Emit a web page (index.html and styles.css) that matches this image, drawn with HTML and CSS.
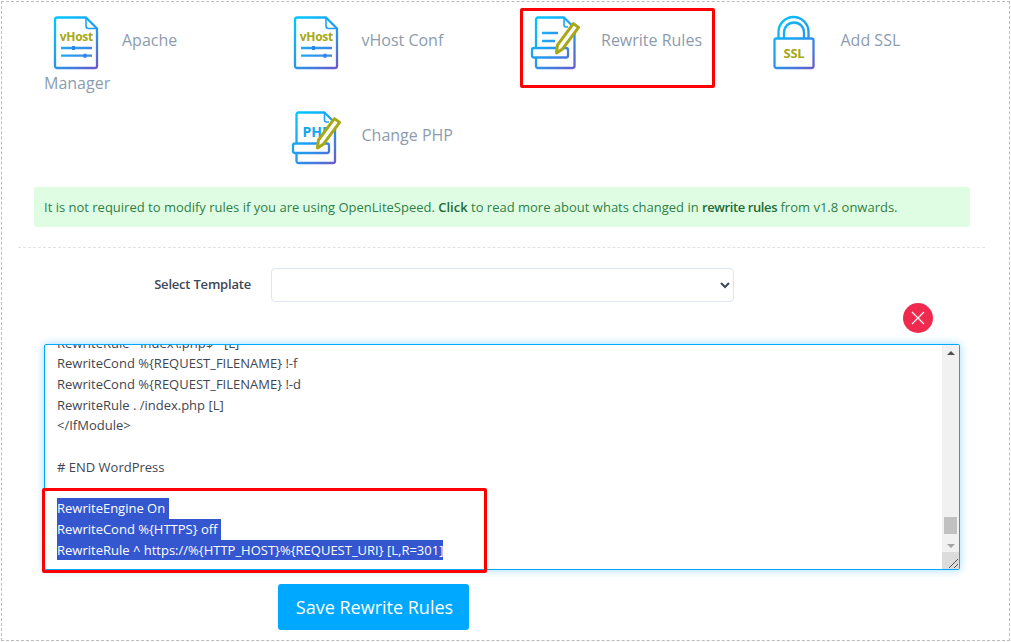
FILE: index.html
```html
<!DOCTYPE html>
<html lang="en">
<head>
<meta charset="utf-8">
<title>Rewrite Rules</title>
<link rel="stylesheet" href="styles.css">
</head>
<body>
<svg class="defs" width="0" height="0" aria-hidden="true">
  <defs>
    <linearGradient id="grad" gradientUnits="userSpaceOnUse" x1="0" y1="4" x2="46" y2="54">
      <stop offset="0" stop-color="#00c8ff"/>
      <stop offset="0.55" stop-color="#2a93ec"/>
      <stop offset="1" stop-color="#7353c6"/>
    </linearGradient>
    <linearGradient id="gradbar" gradientUnits="userSpaceOnUse" x1="0" y1="30" x2="46" y2="40">
      <stop offset="0" stop-color="#14b4fa"/>
      <stop offset="1" stop-color="#4b78dc"/>
    </linearGradient>
  </defs>
</svg>
<main class="panel">
  <div class="tiles">
    <a class="tile">
      <svg class="icon" viewBox="0 0 46 55">
        <path class="ln" d="M3 1.500H32L43 12.500V50a2 2 0 0 1-2 2H3a2 2 0 0 1-2-2V3.500a2 2 0 0 1 2-2Z"/>
        <path class="ln thin" d="M32 1.500V10a2.500 2.500 0 0 0 2.500 2.500H43"/>
        <text class="olive" x="22.400" y="25" text-anchor="middle">vHost</text>
        <path class="ln bar" d="M7 32H38M7 39.700H38"/>
        <path class="knob" d="M18 30h3v4h-3zM29.500 37.700h3v4h-3z"/>
      </svg>Apache Manager
    </a>
    <a class="tile">
      <svg class="icon" viewBox="0 0 46 55">
        <path class="ln" d="M3 1.500H32L43 12.500V50a2 2 0 0 1-2 2H3a2 2 0 0 1-2-2V3.500a2 2 0 0 1 2-2Z"/>
        <path class="ln thin" d="M32 1.500V10a2.500 2.500 0 0 0 2.500 2.500H43"/>
        <text class="olive" x="22.400" y="25" text-anchor="middle">vHost</text>
        <path class="ln bar" d="M7 32H38M7 39.700H38"/>
        <path class="knob" d="M18 30h3v4h-3zM29.500 37.700h3v4h-3z"/>
      </svg>vHost Conf
    </a>
    <a class="tile">
      <svg class="icon" viewBox="0 0 46 55">
        <path class="ln" d="M3 32V3.500a2 2 0 0 1 2-2H31L41.500 12V50a2 2 0 0 1-2 2H5a2 2 0 0 1-2-2V42"/>
        <path class="ln thin" d="M31 1.500V9a2 2 0 0 0 2 2H35"/>
        <path class="ln bar" d="M9 17H25M9 25H22"/>
        <rect class="ln" x="-1" y="32" width="36" height="9.500" rx="2"/>
        <path class="pencil" d="M24.400 29.100L40.400 7.600L45.600 11.400L29.600 32.900L23.500 37Z"/>
      </svg>Rewrite Rules
    </a>
    <a class="tile">
      <svg class="icon" viewBox="0 0 46 55">
        <path class="ln" d="M5.500 22.500V16a15 15 0 0 1 30 0V22.500"/>
        <path class="ln" d="M11 22.500V16.500a10 10 0 0 1 20 0V22.500"/>
        <rect class="ln" x="1.500" y="22.500" width="39" height="29.500" rx="2"/>
        <text class="olive ssl" x="21" y="42" text-anchor="middle">SSL</text>
      </svg>Add SSL
    </a>
    <a class="tile tile-php">
      <svg class="icon" viewBox="0 0 46 55">
        <path class="ln" d="M2.500 32V3.500a2 2 0 0 1 2-2H30.500L41 12V50a2 2 0 0 1-2 2H4.500a2 2 0 0 1-2-2V42"/>
        <path class="ln thin" d="M30.500 1.500V9a2 2 0 0 0 2 2H35"/>
        <text class="php" x="8.500" y="26">PHP</text>
        <rect class="ln" x="-1" y="32.500" width="36" height="9.500" rx="2"/>
        <path class="pencil" d="M24.400 29.100L40.400 7.600L45.600 11.400L29.600 32.900L23.500 37Z"/>
      </svg>Change PHP
    </a>
  </div>

  <p class="alert">It is not required to modify rules if you are using OpenLiteSpeed. <b>Click</b> to read more about whats changed in <b class="tight">rewrite rules</b> from v1.8 onwards.</p>

  <hr class="rule">

  <div class="field">
    <label class="field-label" for="tpl">Select Template</label>
    <select class="field-select" id="tpl"><option></option></select>
  </div>

  <div class="close-row">
    <span class="close">
      <svg viewBox="0 0 30 30" width="30" height="30"><path d="M9 9L21 21M21 9L9 21"/></svg>
    </span>
  </div>

  <div class="editor">
    <div class="code">
      <div class="line cut">RewriteRule ^index\.php$ - [L]</div>
      <div class="line">RewriteCond %{REQUEST_FILENAME} !-f</div>
      <div class="line">RewriteCond %{REQUEST_FILENAME} !-d</div>
      <div class="line">RewriteRule . /index.php [L]</div>
      <div class="line">&lt;/IfModule&gt;</div>
      <div class="line">&nbsp;</div>
      <div class="line"># END WordPress</div>
      <div class="line">&nbsp;</div>
      <div class="line"><span class="sel">RewriteEngine On&nbsp;</span></div>
      <div class="line"><span class="sel">RewriteCond %{HTTPS} off&nbsp;</span></div>
      <div class="line"><span class="sel">RewriteRule ^ https://%{HTTP_HOST}%{REQUEST_URI} [L,R=301]</span></div>
    </div>
    <div class="scrollbar">
      <span class="arrow up"></span>
      <span class="track"><span class="thumb"></span></span>
      <span class="arrow down"></span>
      <span class="corner">
        <svg viewBox="0 0 17 17" width="17" height="17"><path d="M7 16L16 7M12 16L16 12"/></svg>
      </span>
    </div>
  </div>

  <div class="actions">
    <button class="save" type="button">Save Rewrite Rules</button>
  </div>

  <span class="mark mark-tile"></span>
  <span class="mark mark-code"></span>
</main>
</body>
</html>
```
FILE: styles.css
```css
html, body {
  margin: 0;
  padding: 0;
  background: #fff;
}
body {
  padding: 1px 0 0 1px;
  overflow: hidden;
  height: 641px;
  box-sizing: border-box;
  font-family: "Open Sans", sans-serif;
}
.defs {
  position: absolute;
}
.panel {
  position: relative;
  box-sizing: border-box;
  width: 1009px;
  height: 640px;
  border: 1px dashed #bcbcbc;
  padding-top: 14px;
}
.tiles {
  display: grid;
  grid-template-columns: repeat(4, 195px);
  grid-template-rows: 95px 76px;
  column-gap: 44.500px;
  padding-left: 42px;
}
.tile {
  font-size: 16px;
  line-height: 24px;
  color: #8c9cae;
  display: block;
}
.tile-php {
  grid-column: 2;
}
.icon {
  width: 46px;
  height: 55px;
  margin: 0 22px 0 10px;
  vertical-align: -25px;
  overflow: visible;
}
.ln {
  fill: none;
  stroke: url(#grad);
  stroke-width: 2.300;
  stroke-linejoin: round;
}
.thin {
  stroke-width: 1.600;
}
.bar {
  stroke: url(#gradbar);
}
.knob {
  fill: #2e86e6;
}
.olive {
  font: 700 12px "Open Sans", sans-serif;
  letter-spacing: -0.300px;
  fill: #a6a814;
}
.ssl {
  font-size: 13px;
}
.php {
  font: 700 14px "Open Sans", sans-serif;
  fill: #0ea6f0;
}
.pencil {
  fill: #fff;
  stroke: #a6a814;
  stroke-width: 3;
  stroke-linejoin: round;
}
.alert {
  box-sizing: border-box;
  width: 936px;
  height: 40px;
  margin: 0 0 0 32px;
  padding: 0 10px;
  background: #dffde3;
  border-radius: 3px;
  font-size: 13px;
  line-height: 41px;
  color: #2f7f47;
}
.alert b {
  font-weight: 600;
  color: #226b37;
}
.alert .tight {
  letter-spacing: -0.400px;
}
.rule {
  width: 967px;
  margin: 20px 0 0 16px;
  border: 0;
  border-top: 1px dashed #dfe3e6;
}
.field {
  display: flex;
  align-items: center;
  margin-top: 20px;
}
.field-label {
  box-sizing: border-box;
  width: 249px;
  margin-bottom: 2px;
  text-align: right;
  font-size: 13px;
  font-weight: 600;
  letter-spacing: -0.200px;
  color: #3e4856;
}
.field-select {
  box-sizing: border-box;
  width: 463px;
  height: 34px;
  margin-left: 20px;
  background: #fff;
  border: 1px solid #dfe6f1;
  border-radius: 4px;
  font-family: "Open Sans", sans-serif;
  font-size: 13px;
  color: #3e4856;
}
.close-row {
  display: flex;
  justify-content: flex-end;
  padding-right: 76px;
  margin-top: 1px;
  height: 41px;
}
.close {
  width: 30px;
  height: 30px;
  border-radius: 50%;
  background: #ef2a4e;
}
.close svg {
  display: block;
}
.close path {
  stroke: #fff;
  stroke-width: 1.200;
  fill: none;
}
.editor {
  box-sizing: border-box;
  display: flex;
  width: 916px;
  height: 226px;
  margin-left: 42px;
  border: 1px solid #00a8ff;
  border-radius: 2px;
  box-shadow: 0 0 8px rgba(0, 168, 255, 0.4);
  overflow: hidden;
}
.code {
  flex: 1;
  overflow: hidden;
  padding-left: 12px;
  margin-top: -12.500px;
  font-size: 13px;
  line-height: 20.700px;
  color: #3f4650;
}
.line {
  white-space: pre;
}
.sel {
  background: #3456cf;
  color: #fff;
  display: inline-block;
}
.scrollbar {
  position: relative;
  display: flex;
  flex-direction: column;
  width: 17px;
  background: #f1f1f1;
}
.arrow {
  width: 0;
  height: 0;
  margin: 6px auto 5px;
  border-left: 4px solid transparent;
  border-right: 4px solid transparent;
}
.up {
  border-bottom: 4px solid #505050;
}
.down {
  border-top: 4px solid #a3a3a3;
  margin-bottom: 21px;
}
.track {
  flex: 1;
  display: flex;
  flex-direction: column;
  justify-content: flex-end;
  padding: 0 2px;
}
.thumb {
  display: block;
  height: 17px;
  margin-bottom: 4px;
  background: #c1c1c1;
}
.corner {
  position: absolute;
  right: 0;
  bottom: 0;
  width: 17px;
  height: 17px;
  background: #dcdcdc;
}
.corner svg {
  display: block;
}
.corner path {
  stroke: #555;
  stroke-width: 1;
  fill: none;
}
.actions {
  margin: 14px 0 0 276px;
}
.save {
  box-sizing: border-box;
  width: 191px;
  height: 46px;
  padding: 0 0 0 2px;
  background: #00a8ff;
  border: 0;
  border-radius: 3px;
  font-family: "Open Sans", sans-serif;
  font-size: 18px;
  color: #fff;
}
.mark {
  position: absolute;
  box-sizing: border-box;
  border: 3px solid #f00;
  border-radius: 2px;
}
.mark-tile {
  left: 518px;
  top: 6px;
  width: 195px;
  height: 80px;
}
.mark-code {
  left: 40px;
  top: 486px;
  width: 445px;
  height: 85px;
}
```
